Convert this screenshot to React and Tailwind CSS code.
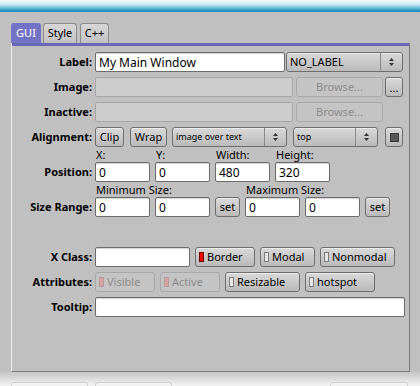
import clsx from "clsx";

function Btn({ className, disabled, children }) {
  return (
    <div
      className={clsx(
        "flex h-[20px] shrink-0 items-center justify-center rounded-[3px] border text-[11px]",
        disabled
          ? "border-[#a8a8a8] bg-[#c4c4c4] text-[#8c8c8c]"
          : "border-[#6e6e6e] bg-gradient-to-b from-[#d9d9d9] to-[#bababa] text-black shadow-[inset_0_1px_0_#ebebeb]",
        className
      )}
    >
      {children}
    </div>
  );
}

function Check({ className, state, disabled, children }) {
  return (
    <Btn className={clsx("!justify-start pl-[3px]", className)} disabled={disabled}>
      <span
        className={clsx(
          "h-[10px] w-[5px] shrink-0 border",
          state === "on" && "border-[#6a0000] bg-[#ff0000]",
          state === "dim" && "border-[#b49a9a] bg-[#d6a2a2]",
          state === "off" && "border-[#7c7c7c] bg-[#e6e6e6]"
        )}
      />
      <span className="ml-[3px]">{children}</span>
    </Btn>
  );
}

function Arrows() {
  return (
    <svg width="7" height="10" viewBox="0 0 7 10">
      <path d="M1 4 L3.5 1 L6 4 Z" fill="#333" />
      <path d="M1 6 L3.5 9 L6 6 Z" fill="#333" />
    </svg>
  );
}

function Choice({ className, small, children }) {
  return (
    <div
      className={clsx(
        "flex h-[20px] shrink-0 items-center rounded-[3px] border border-[#6e6e6e] bg-gradient-to-b from-[#d9d9d9] to-[#bababa] shadow-[inset_0_1px_0_#ebebeb]",
        className
      )}
    >
      <span className={clsx("flex-1 truncate pl-[3px]", small ? "text-[9px]" : "text-[11px]")}>
        {children}
      </span>
      <div className="flex h-full w-[22px] items-center justify-center border-l border-[#8a8a8a]">
        <Arrows />
      </div>
    </div>
  );
}

function Field({ className, value = "", disabled }) {
  return (
    <input
      readOnly
      value={value}
      className={clsx(
        "h-[20px] shrink-0 rounded-[2px] border px-[3px] text-[12px] outline-none",
        disabled
          ? "border-[#a6a6a6] bg-[#cdcdcd]"
          : "border-[#6c6c6c] bg-white text-black shadow-[inset_0_1px_1px_rgba(0,0,0,0.18)]",
        className
      )}
    />
  );
}

function Row({ label, className, children }) {
  return (
    <div className={clsx("flex h-[20px] items-center", className)}>
      <div className="w-[83px] shrink-0 pr-[3px] text-right text-[11px] font-bold">{label}</div>
      <div className="flex items-center">{children}</div>
    </div>
  );
}

function SubLabels({ items, className }) {
  return (
    <div className={clsx("flex h-[15px] items-end pl-[83px] text-[11px] leading-[15px]", className)}>
      {items.map(([text, cls]) => (
        <span key={text} className={cls}>
          {text}
        </span>
      ))}
    </div>
  );
}

export default function App() {
  return (
    <div className="h-[386px] w-[420px] overflow-hidden bg-[#c0c0c0] font-['Noto_Sans',sans-serif] text-black">
      <div className="h-[12px] bg-[linear-gradient(to_bottom,#f3f9fb_0%,#cfeaf3_35%,#79c4de_62%,#2898c3_88%,#1c88b6_100%)]" />

      <div className="mt-[11px] flex h-[20px] items-end pl-[11px] text-[11px]">
        <div className="flex h-[20px] w-[30px] items-center justify-center rounded-t-[3px] bg-[#7373c6] text-white">
          GUI
        </div>
        <div className="ml-[2px] flex h-[20px] w-[34px] items-center justify-center rounded-t-[3px] border border-b-0 border-[#8c8c8c] bg-gradient-to-b from-[#d6d6d6] to-[#c2c2c2]">
          Style
        </div>
        <div className="ml-[3px] flex h-[20px] w-[29px] items-center justify-center rounded-t-[3px] border border-b-0 border-[#8c8c8c] bg-gradient-to-b from-[#d6d6d6] to-[#c2c2c2]">
          C++
        </div>
      </div>

      <div className="ml-[11px] flex h-[329px] w-[399px] flex-col border-b border-l border-r border-b-[#7a7a7a] border-l-[#eeeeee] border-r-[#7a7a7a]">
        <div className="h-[3px] shrink-0 bg-[#6767b6]" />
        <div className="pt-[6px]">
          <Row label="Label:">
            <Field className="w-[190px]" value="My Main Window" />
            <Choice className="ml-[1px] w-[117px]">NO_LABEL</Choice>
          </Row>

          <Row label="Image:" className="mt-[5px]">
            <Field className="w-[198px]" disabled />
            <Btn className="ml-[3px] w-[87px]" disabled>
              Browse...
            </Btn>
            <Btn className="ml-[2px] w-[18px] items-end pb-[3px] leading-none">...</Btn>
          </Row>

          <Row label="Inactive:" className="mt-[5px]">
            <Field className="w-[198px]" disabled />
            <Btn className="ml-[3px] w-[87px]" disabled>
              Browse...
            </Btn>
          </Row>

          <Row label="Alignment:" className="mt-[5px]">
            <Btn className="w-[29px]">Clip</Btn>
            <Btn className="ml-[6px] w-[37px]">Wrap</Btn>
            <Choice small className="ml-[5px] w-[115px]">
              image over text
            </Choice>
            <Choice small className="ml-[6px] w-[85px]">
              top
            </Choice>
            <Btn className="ml-[7px] w-[18px]">
              <span className="h-[9px] w-[9px] border border-[#3a3a3a] bg-[#585858]" />
            </Btn>
          </Row>

          <SubLabels
            items={[
              ["X:", "w-[60px] pl-[1px]"],
              ["Y:", "w-[60px] pl-[1px]"],
              ["Width:", "w-[60px] pl-[1px]"],
              ["Height:", "pl-[1px]"],
            ]}
          />
          <Row label="Position:">
            <Field className="w-[55px]" value="0" />
            <Field className="ml-[5px] w-[55px]" value="0" />
            <Field className="ml-[5px] w-[55px]" value="480" />
            <Field className="ml-[5px] w-[55px]" value="320" />
          </Row>

          <SubLabels
            items={[
              ["Minimum Size:", "w-[150px] pl-[1px]"],
              ["Maximum Size:", "pl-[1px]"],
            ]}
          />
          <Row label="Size Range:">
            <Field className="w-[55px]" value="0" />
            <Field className="ml-[5px] w-[55px]" value="0" />
            <Btn className="ml-[5px] w-[25px]">set</Btn>
            <Field className="ml-[5px] w-[55px]" value="0" />
            <Field className="ml-[5px] w-[55px]" value="0" />
            <Btn className="ml-[5px] w-[25px]">set</Btn>
          </Row>

          <Row label="X Class:" className="mt-[30px]">
            <Field className="w-[95px]" />
            <Check className="ml-[5px] w-[60px]" state="on">
              Border
            </Check>
            <Check className="ml-[5px] w-[55px]" state="off">
              Modal
            </Check>
            <Check className="ml-[5px] w-[75px]" state="off">
              Nonmodal
            </Check>
          </Row>

          <Row label="Attributes:" className="mt-[5px]">
            <Check className="w-[60px]" state="dim" disabled>
              Visible
            </Check>
            <Check className="ml-[5px] w-[60px]" state="dim" disabled>
              Active
            </Check>
            <Check className="ml-[5px] w-[75px]" state="off">
              Resizable
            </Check>
            <Check className="ml-[5px] w-[70px]" state="off">
              hotspot
            </Check>
          </Row>

          <Row label="Tooltip:" className="mt-[5px]">
            <Field className="w-[310px]" />
          </Row>
        </div>
      </div>

      <div className="flex h-[14px] items-start bg-gradient-to-b from-[#c6c6c6] to-[#f3f3f3] pl-[11px] pt-[10px]">
        <div className="h-[10px] w-[77px] rounded-t-[3px] border border-[#d0d0d0] bg-[#f2f2f2]" />
        <div className="ml-[7px] h-[10px] w-[77px] rounded-t-[3px] border border-[#d0d0d0] bg-[#f2f2f2]" />
        <div className="ml-auto mr-[12px] h-[10px] w-[78px] rounded-t-[3px] border border-[#d0d0d0] bg-[#f2f2f2]" />
      </div>
    </div>
  );
}
